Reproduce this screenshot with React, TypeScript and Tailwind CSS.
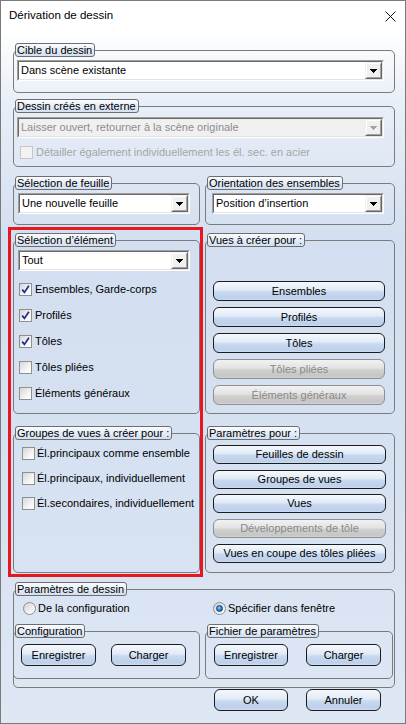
import React from "react";

function Legend({ children }: { children: React.ReactNode }) {
  return (
    <legend className="ml-[1px] h-[14px] pl-[1px] pr-[2px] border border-[#6e6e6e] rounded-[3px] bg-[linear-gradient(to_bottom,#fbfdff_0%,#e6eef8_45%,#d3dff0_100%)] leading-[12px] text-black whitespace-nowrap">
      {children}
    </legend>
  );
}

function Group({
  title,
  className = "",
  children,
}: {
  title: string;
  className?: string;
  children?: React.ReactNode;
}) {
  return (
    <fieldset className={`border border-[#7b7b7b] rounded-[5px] min-w-0 ${className}`}>
      <Legend>{title}</Legend>
      {children}
    </fieldset>
  );
}

function Arrow({ disabled }: { disabled?: boolean }) {
  const c = disabled ? "#a3a3a3" : "#000000";
  return (
    <svg width="7" height="4" viewBox="0 0 7 4" shapeRendering="crispEdges">
      <rect x="0" y="0" width="7" height="1" fill={c} />
      <rect x="1" y="1" width="5" height="1" fill={c} />
      <rect x="2" y="2" width="3" height="1" fill={c} />
      <rect x="3" y="3" width="1" height="1" fill={c} />
    </svg>
  );
}

function Combo({
  value,
  disabled = false,
  className = "",
}: {
  value: string;
  disabled?: boolean;
  className?: string;
}) {
  return (
    <div
      className={`h-[21px] border border-t-[#a0a0a0] border-l-[#a0a0a0] border-r-[#ffffff] border-b-[#ffffff] ${className}`}
    >
      <div
        className={`h-full flex border border-t-[#696969] border-l-[#696969] border-r-[#e3e3e3] border-b-[#e3e3e3] ${
          disabled ? "bg-[#f0f0f0]" : "bg-white"
        }`}
      >
        <div
          className={`flex-1 flex items-center pl-[2px] whitespace-nowrap overflow-hidden ${
            disabled ? "text-[#8d8d8d]" : "text-black"
          }`}
        >
          {value}
        </div>
        <div className="w-[17px] h-full border border-t-[#f0f0f0] border-l-[#f0f0f0] border-r-[#696969] border-b-[#696969]">
          <div className="w-full h-full flex items-center justify-center bg-[#f0f0f0] border border-t-white border-l-white border-r-[#a0a0a0] border-b-[#a0a0a0]">
            <Arrow disabled={disabled} />
          </div>
        </div>
      </div>
    </div>
  );
}

function Check({ checked = false, disabled = false }: { checked?: boolean; disabled?: boolean }) {
  return (
    <span
      className={`w-[13px] h-[13px] shrink-0 border flex items-center justify-center ${
        disabled
          ? "border-[#c6c6c6] bg-[#f2f2f2]"
          : "border-[#8e8f8f] bg-[linear-gradient(135deg,#d6d6d6_0%,#f4f4f4_60%,#ffffff_100%)]"
      }`}
    >
      {checked && (
        <svg width="9" height="9" viewBox="0 0 9 9">
          <path d="M1.2 4.6 L3.4 7.4 L7.9 0.8" stroke="#1d2a8f" strokeWidth="1.7" fill="none" />
        </svg>
      )}
    </span>
  );
}

function CheckRow({
  label,
  checked,
  disabled,
  gap = "gap-[3px]",
}: {
  label: string;
  checked?: boolean;
  disabled?: boolean;
  gap?: string;
}) {
  return (
    <div className={`h-[13px] flex items-center ${gap}`}>
      <Check checked={checked} disabled={disabled} />
      <span className={`whitespace-nowrap ${disabled ? "text-[#a6a6a6]" : "text-black"}`}>{label}</span>
    </div>
  );
}

function Radio({ checked = false }: { checked?: boolean }) {
  return (
    <span className="w-[13px] h-[13px] shrink-0 rounded-full border border-[#8e8f8f] bg-[linear-gradient(135deg,#d2d2d2_0%,#f0f0f0_60%,#ffffff_100%)] flex items-center justify-center">
      {checked && (
        <span className="w-[7px] h-[7px] rounded-full border border-[#0e3c70] bg-[radial-gradient(circle_at_40%_35%,#9fd6ff_0%,#2f86d6_45%,#0d5aa6_100%)]" />
      )}
    </span>
  );
}

function Btn({
  label,
  disabled = false,
  className = "",
}: {
  label: string;
  disabled?: boolean;
  className?: string;
}) {
  return (
    <div
      className={`flex items-center justify-center rounded-[6px] border whitespace-nowrap ${
        disabled
          ? "border-[#8f8f8f] text-[#8a8a8a] bg-[linear-gradient(to_bottom,#f2f2f2_0%,#e3e3e3_45%,#d0d0d0_55%,#c6c6c6_90%,#d4d4d4_100%)]"
          : "border-[#1c1c1c] text-black bg-[linear-gradient(to_bottom,#f6f9fd_0%,#e0eaf7_45%,#c8d9ef_55%,#bdd0eb_90%,#d0ddf1_100%)]"
      } ${className}`}
    >
      {label}
    </div>
  );
}

export default function App() {
  return (
    <div className="w-[406px] h-[724px] border border-[#7a7a7a] flex flex-col font-['Liberation_Sans',Arial,sans-serif] text-[11px] text-black overflow-hidden">
      {/* Title bar */}
      <div className="h-[29px] shrink-0 bg-white flex items-center pl-[8px] pr-[9px]">
        <span className="flex-1 text-[11.5px] pt-[1px]">Dérivation de dessin</span>
        <svg width="11" height="11" viewBox="0 0 11 11" className="mt-[1px]">
          <path d="M0.5 0.5 L10.5 10.5 M10.5 0.5 L0.5 10.5" stroke="#111" strokeWidth="1" />
        </svg>
      </div>

      {/* Body */}
      <div className="flex-1 flex flex-col pl-[12px] pr-[10px] pt-[13px] bg-[linear-gradient(to_bottom,#ffffff_0px,#e9eff8_70px,#d3dff0_210px,#d6e1f1_450px,#dee7f4_693px)]">
        <Group title="Cible du dessin" className="w-[382px]">
          <div className="pt-[3px] pb-[11px] pl-[3px] pr-[10px]">
            <Combo value="Dans scène existante" />
          </div>
        </Group>

        <Group title="Dessin créés en externe" className="w-[382px] mt-[6px]">
          <div className="pt-[4px] pb-[7px] pl-[3px] pr-[10px]">
            <Combo value="Laisser ouvert, retourner à la scène originale" disabled />
            <div className="mt-[8px] pl-[3px]">
              <CheckRow label="Détailler également individuellement les él. sec. en acier" disabled />
            </div>
          </div>
        </Group>

        <div className="flex gap-[5px] mt-[9px]">
          <Group title="Sélection de feuille" className="w-[187px]">
            <div className="pt-[3px] pb-[10px] pl-[4px] pr-[9px]">
              <Combo value="Une nouvelle feuille" />
            </div>
          </Group>
          <Group title="Orientation des ensembles" className="w-[190px]">
            <div className="pt-[3px] pb-[10px] pl-[6px] pr-[10px]">
              <Combo value="Position d’insertion" />
            </div>
          </Group>
        </div>

        <div className="flex gap-[5px] mt-[8px]">
          {/* Left column, highlighted */}
          <div className="relative w-[187px] flex flex-col gap-[12px]">
            <Group title="Sélection d’élément">
              <div className="pt-[3px] pb-[13px] pl-[4px] pr-[9px]">
                <Combo value="Tout" />
                <div className="mt-[12px] pl-[1px] flex flex-col gap-[13px]">
                  <CheckRow label="Ensembles, Garde-corps" checked />
                  <CheckRow label="Profilés" checked />
                  <CheckRow label="Tôles" checked />
                  <CheckRow label="Tôles pliées" />
                  <CheckRow label="Éléments généraux" />
                </div>
              </div>
            </Group>

            <Group title="Groupes de vues à créer pour :" className="flex-1">
              <div className="pt-[7px] pl-[8px] flex flex-col gap-[12px]">
                <CheckRow label="Él.principaux comme ensemble" gap="gap-[2px]" />
                <CheckRow label="Él.principaux, individuellement" gap="gap-[2px]" />
                <CheckRow label="Él.secondaires, individuellement" gap="gap-[2px]" />
              </div>
            </Group>

            <div className="absolute -left-[5px] -top-[6px] -right-[3px] -bottom-[4px] border-[3px] border-[#e8161f] pointer-events-none" />
          </div>

          {/* Right column */}
          <div className="w-[190px] flex flex-col gap-[12px]">
            <Group title="Vues à créer pour :">
              <div className="pt-[34px] pb-[8px] pl-[7px] pr-[9px] flex flex-col gap-[6px]">
                <Btn label="Ensembles" className="h-[20px]" />
                <Btn label="Profilés" className="h-[20px]" />
                <Btn label="Tôles" className="h-[20px]" />
                <Btn label="Tôles pliées" className="h-[20px]" disabled />
                <Btn label="Éléments généraux" className="h-[20px]" disabled />
              </div>
            </Group>

            <Group title="Paramètres pour :">
              <div className="pt-[5px] pb-[9px] pl-[7px] pr-[8px] flex flex-col">
                <Btn label="Feuilles de dessin" className="h-[19px]" />
                <Btn label="Groupes de vues" className="h-[19px] mt-[6px]" />
                <Btn label="Vues" className="h-[19px] mt-[5px]" />
                <Btn label="Développements de tôle" className="h-[19px] mt-[6px]" disabled />
                <Btn label="Vues en coupe des tôles pliées" className="h-[19px] mt-[6px]" />
              </div>
            </Group>
          </div>
        </div>

        <Group title="Paramètres de dessin" className="w-[382px] mt-[9px]">
          <div className="pt-[6px] pb-[8px] pr-[1px]">
            <div className="h-[13px] flex items-center">
              <div className="w-[199px] pl-[9px] flex items-center gap-[2px]">
                <Radio />
                <span>De la configuration</span>
              </div>
              <div className="flex items-center gap-[2px]">
                <Radio checked />
                <span>Spécifier dans fenêtre</span>
              </div>
            </div>
            <div className="flex gap-[5px] mt-[9px] -ml-[1px]">
              <Group title="Configuration" className="w-[187px]">
                <div className="pt-[6px] pb-[12px] pl-[7px] flex gap-[15px]">
                  <Btn label="Enregistrer" className="w-[75px] h-[22px]" />
                  <Btn label="Charger" className="w-[75px] h-[22px]" />
                </div>
              </Group>
              <Group title="Fichier de paramètres" className="w-[188px]">
                <div className="pt-[6px] pb-[12px] pl-[8px] flex gap-[18px]">
                  <Btn label="Enregistrer" className="w-[74px] h-[22px]" />
                  <Btn label="Charger" className="w-[75px] h-[22px]" />
                </div>
              </Group>
            </div>
          </div>
        </Group>

        <div className="flex gap-[18px] mt-[1px] ml-[201px]">
          <Btn label="OK" className="w-[74px] h-[22px]" />
          <Btn label="Annuler" className="w-[75px] h-[22px]" />
        </div>
      </div>
    </div>
  );
}
